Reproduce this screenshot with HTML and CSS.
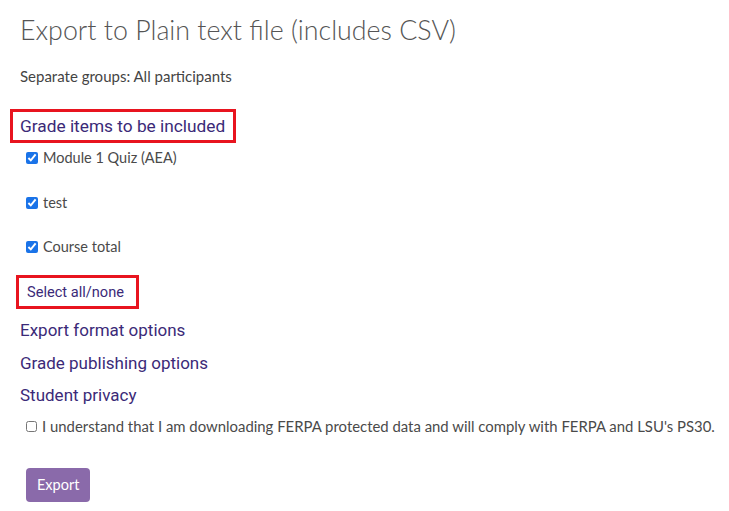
FILE: index.html
```html
<!DOCTYPE html>
<html lang="en">
<head>
    <meta charset="UTF-8">
    <title>Export to Plain text file</title>
    <link rel="stylesheet" href="styles.css">
</head>
<body>
    <div class="page">
        <h1 class="title">Export to Plain text file (includes CSV)</h1>
        <p class="groups">Separate groups: All participants</p>

        <!-- grade items -->
        <h2 class="section marked">Grade items to be included</h2>
        <div class="items">
            <label class="item"><input type="checkbox" checked> Module 1 Quiz (AEA)</label>
            <label class="item"><input type="checkbox" checked> test</label>
            <label class="item"><input type="checkbox" checked> Course total</label>
        </div>
        <a class="select-all marked" href="#">Select all/none</a>

        <h2 class="section">Export format options</h2>
        <h2 class="section">Grade publishing options</h2>
        <h2 class="section">Student privacy</h2>
        <label class="item ferpa"><input type="checkbox"> I understand that I am downloading FERPA protected data and will comply with FERPA and LSU's PS30.</label>

        <button class="export">Export</button>
    </div>
</body>
</html>
```

FILE: styles.css
```css
body {
    margin: 0;
    background: #fff;
    font-family: Lato, 'Noto Sans', sans-serif;
    color: #444;
}

.page {
    padding: 14px 20px;
}

.title {
    font-family: Lato, sans-serif;
    font-weight: 300;
    font-size: 26.8px;
    color: #555;
    margin: 0 0 21px;
}

.groups {
    font-size: 15px;
    margin: 0 0 24px;
}

.section {
    font-family: Roboto, sans-serif;
    font-weight: 400;
    font-size: 17px;
    color: #3b2a78;
    margin: 0;
    line-height: 32.5px;
}

.marked {
    border: 3px solid #e8141f;
}

h2.marked {
    display: inline-block;
    margin-left: -10px;
    padding: 0 8px 0 7px;
    line-height: 28px;
    font-size: 17.3px;
}

.items {
    display: flex;
    flex-direction: column;
    gap: 22.5px;
    margin: 4px 0 17px 6px;
}

.item {
    display: flex;
    align-items: center;
    gap: 5px;
    font-size: 14.5px;
    color: #4a4a4a;
    line-height: 22px;
}

.item input {
    margin: 0;
    width: 12px;
    height: 12px;
    accent-color: #1a73e8;
}

.select-all {
    display: inline-block;
    margin: 0 0 5px -4px;
    padding: 4px 12px 4px 8px;
    font-family: Roboto, sans-serif;
    font-size: 14.6px;
    color: #3b2a78;
    text-decoration: none;
    line-height: 20px;
}

.ferpa {
    margin: 3px 0 0 6px;
    font-size: 14.9px;
    white-space: nowrap;
}

.ferpa input {
    width: 11px;
    height: 11px;
    margin-top: 2px;
}

.export {
    display: block;
    margin: 31px 0 0 6px;
    padding: 0 11px;
    height: 34px;
    background: #8a6aaa;
    color: #fff;
    border: none;
    border-radius: 4px;
    font-family: Lato, sans-serif;
    font-size: 14.5px;
}
```
